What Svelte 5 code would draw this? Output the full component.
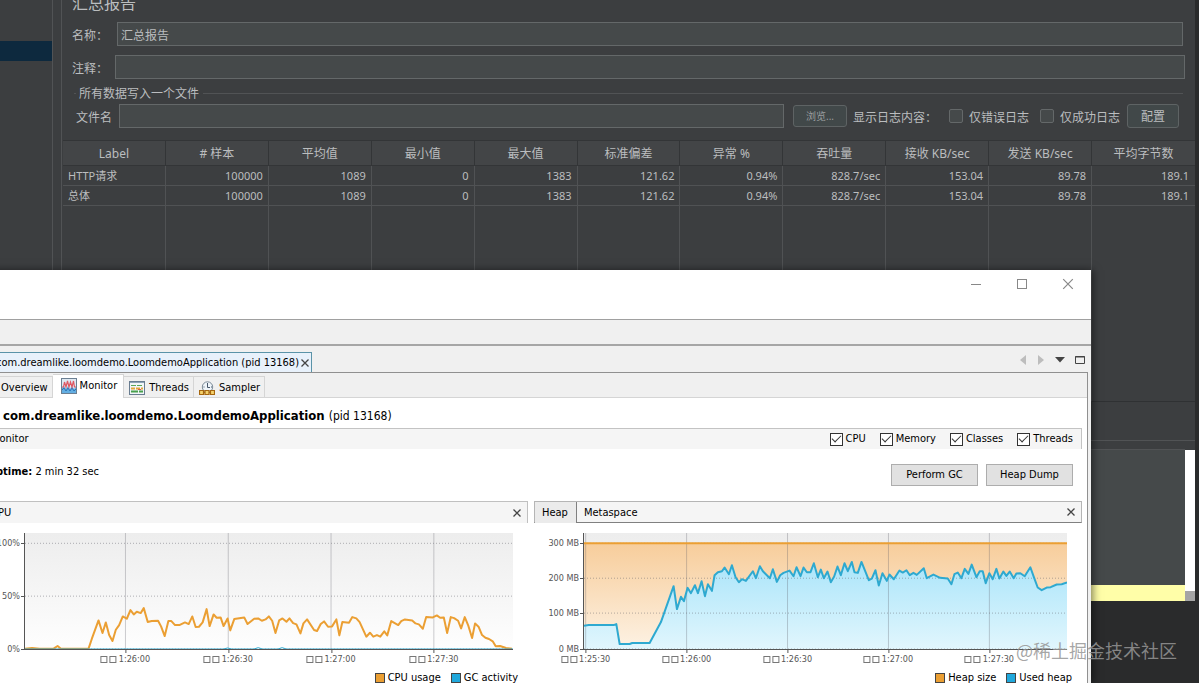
<script>
  const columns = ['Label', '# 样本', '平均值', '最小值', '最大值', '标准偏差', '异常 %', '吞吐量', '接收 KB/sec', '发送 KB/sec', '平均字节数'];
  const samples = [
    ['HTTP请求', '100000', '1089', '0', '1383', '121.62', '0.94%', '828.7/sec', '153.04', '89.78', '189.1'],
    ['总体', '100000', '1089', '0', '1383', '121.62', '0.94%', '828.7/sec', '153.04', '89.78', '189.1']
  ];
  const toggles = ['CPU', 'Memory', 'Classes', 'Threads'];

  const top = 129;
  const height = 349;

  const cpuLine =
    '74,477 95,475 118,477 160,477 172,469 182,477 265,477 275,447 295,392 307,430 317,398 327,436 337,454 347,420 357,406 368,380 380,387 391,361 401,374 410,366 422,370 431,355 443,397 455,394 474,393 483,410 494,439 505,394 514,394 525,406 538,406 555,398 566,403 577,380 587,412 597,411 608,398 620,358 629,409 641,374 650,384 662,383 671,409 683,386 691,422 703,388 733,383 743,403 763,387 775,386 786,393 797,389 807,380 817,393 827,430 838,392 848,386 860,396 869,386 880,400 890,404 902,431 911,401 922,389 943,421 952,424 963,403 973,395 985,411 997,410 1010,389 1019,437 1028,397 1048,399 1058,382 1070,386 1080,397 1100,441 1111,429 1121,441 1132,436 1142,441 1154,425 1163,437 1175,394 1196,406 1205,394 1216,389 1238,392 1248,401 1258,404 1270,417 1280,382 1300,383 1312,377 1322,384 1333,383 1343,430 1354,382 1364,385 1376,393 1385,416 1396,382 1406,406 1418,445 1427,401 1438,412 1448,436 1458,444 1469,448 1480,455 1489,470 1502,469 1520,475 1538,477';
  const gcLine = '74,478 670,478 683,475 696,478 762,478 775,474 788,478 834,478 847,474 860,478 1541,478';
  const heapLine =
    '161,408 175,406 250,406 258,403 268,463 298,463 306,460 358,460 392,397 430,289 440,358 452,321 461,334 472,294 482,310 494,286 503,310 514,274 524,319 533,283 545,303 553,256 563,247 575,244 583,233 596,253 605,226 616,262 626,277 635,268 647,273 668,244 677,265 689,229 698,244 719,265 728,238 740,276 750,256 760,249 778,242 790,259 799,232 811,259 820,233 830,247 841,247 851,220 863,262 872,239 881,265 892,245 902,277 912,260 922,230 932,256 943,220 953,244 965,216 973,247 983,249 994,216 1016,271 1025,266 1036,241 1046,287 1057,250 1070,273 1078,254 1091,268 1108,242 1118,248 1129,241 1139,256 1150,249 1160,255 1181,235 1190,265 1210,254 1230,264 1253,266 1264,283 1273,253 1283,248 1294,265 1304,237 1315,252 1325,224 1339,262 1349,244 1358,244 1367,280 1378,250 1388,268 1399,237 1408,266 1420,245 1429,258 1439,245 1451,265 1459,251 1471,250 1484,259 1501,232 1511,260 1523,293 1535,301 1550,293 1562,292 1580,284 1595,283 1611,278';

  const charts = [
    {
      kind: 'cpu',
      left: 74,
      width: 1467,
      y: [['100%', 160], ['50%', 319], ['0%', 478]],
      x: [['1:26:00', 376], ['1:26:30', 685], ['1:27:00', 994], ['1:27:30', 1303]],
      legend: [['CPU usage', 'orange'], ['GC activity', 'blue']]
    },
    {
      kind: 'heap',
      left: 161,
      width: 1450,
      y: [['300 MB', 160], ['200 MB', 265], ['100 MB', 370], ['0 MB', 478]],
      x: [['1:25:30', 166], ['1:26:00', 469], ['1:26:30', 772], ['1:27:00', 1075], ['1:27:30', 1378]],
      legend: [['Heap size', 'orange'], ['Used heap', 'blue']]
    }
  ];
</script>

{#snippet cross(size)}
  <svg width={size} height={size} viewBox="0 0 10 10" aria-hidden="true"><path d="M1 1L9 9M9 1L1 9" fill="none" stroke="currentColor" /></svg>
{/snippet}

{#snippet smallCross()}
  <svg width="8" height="8" viewBox="0 0 8 8" aria-hidden="true"><path d="M.5 .5L7.500 7.500M7.500 .5L.5 7.500" fill="none" stroke="currentColor" stroke-width="1.300" /></svg>
{/snippet}

<div class="desktop">
  <aside class="tree"><div class="selected"></div></aside>
  <main class="report">
    <div class="form">
      <h1>汇总报告</h1>
      <div class="field"><label for="name">名称：</label><input id="name" value="汇总报告" /></div>
      <div class="field comment"><label for="comment">注释：</label><input id="comment" /></div>
      <fieldset>
        <legend>所有数据写入一个文件</legend>
        <div class="file-row">
          <label for="file">文件名</label>
          <input id="file" class="file" />
          <button class="browse">浏览...</button>
          <span class="log-label">显示日志内容：</span>
          <label class="check"><input type="checkbox" /><span>仅错误日志</span></label>
          <label class="check"><input type="checkbox" /><span>仅成功日志</span></label>
          <button class="config">配置</button>
        </div>
      </fieldset>
    </div>
    <div class="results">
      <table>
        <thead><tr>{#each columns as c}<th>{c}</th>{/each}</tr></thead>
        <tbody>
          {#each samples as row}
            <tr>{#each row as cell}<td>{cell}</td>{/each}</tr>
          {/each}
          <tr class="rest">{#each columns as c}<td></td>{/each}</tr>
        </tbody>
      </table>
    </div>
    <div class="splitter"></div>
    <div class="editor">
      <div class="code"></div>
      <div class="scroll"></div>
    </div>
  </main>

  <section class="window">
    <header class="titlebar">
      <button aria-label="Minimize"><svg width="10" height="10" viewBox="0 0 10 10"><path d="M0 5.500H10" stroke="currentColor" /></svg></button>
      <button aria-label="Maximize"><svg width="10" height="10" viewBox="0 0 10 10"><rect x=".5" y=".5" width="9" height="9" fill="none" stroke="currentColor" /></svg></button>
      <button aria-label="Close">{@render cross(12)}</button>
    </header>
    <div class="toolbar"></div>
    <div class="docs">
      <div class="doc-tab">
        <span>com.dreamlike.loomdemo.LoomdemoApplication (pid 13168)</span>
        <button aria-label="Close tab">{@render smallCross()}</button>
      </div>
      <div class="doc-tools">
        <button aria-label="Previous" class="off"><svg width="6" height="12" viewBox="0 0 6 12"><path d="M6 1V11L0 6Z" fill="currentColor" /></svg></button>
        <button aria-label="Next" class="off"><svg width="6" height="12" viewBox="0 0 6 12"><path d="M0 1V11L6 6Z" fill="currentColor" /></svg></button>
        <button aria-label="List"><svg width="10" height="6" viewBox="0 0 10 6"><path d="M0 0H10L5 5.500Z" fill="currentColor" /></svg></button>
        <button aria-label="Expand"><svg width="10" height="8" viewBox="0 0 10 8"><path d="M.5 .5H9.500V7.500H.5Z M0 1H10" fill="none" stroke="currentColor" /></svg></button>
      </div>
    </div>

    <div class="frame">
      <nav class="views">
        <button>Overview</button>
        <button class="active">
          <svg width="16" height="16" viewBox="0 0 16 16" aria-hidden="true">
            <rect x=".5" y=".5" width="15" height="15" fill="#dfe9f2" stroke="#6b7f92" />
            <path d="M1 10L3 8 5 11 7 8 9 11 11 8 13 11 15 9V15H1Z" fill="#63aee2" />
            <path d="M1 12L3 10 5 13 7 10 9 13 11 10 13 13 15 11" fill="none" stroke="#2c76b8" />
            <path d="M1 9H2.500L3.500 4 5 9 6.500 3 8 9 9.500 4 11 9 12.500 3 13.500 9H15" fill="none" stroke="#df5862" stroke-width="1.200" />
          </svg>Monitor
        </button>
        <button>
          <svg width="16" height="14" viewBox="0 0 16 14" aria-hidden="true">
            <rect x=".5" y=".5" width="15" height="13" fill="#f2f5f8" stroke="#687c90" />
            <path d="M1 1.500H15" stroke="#8da4b8" />
            <path d="M2 4.500H14" stroke="#58a55a" stroke-dasharray="5 1" />
            <path d="M2 7.500H14" stroke="#e2a63a" stroke-width="2" stroke-dasharray="4 1" />
            <path d="M2 10.500H14" stroke="#48a04c" stroke-width="2" stroke-dasharray="7 1" />
            <path d="M9 8.500H12" stroke="#d35a4c" />
          </svg>Threads
        </button>
        <button>
          <svg width="16" height="15" viewBox="0 0 16 15" aria-hidden="true">
            <circle cx="8.500" cy="6" r="5.200" fill="#eef4f9" stroke="#7d8b98" />
            <path d="M8.500 2V6.500H11M4.500 6H5.500M12 6H13" fill="none" stroke="#46576a" />
            <path d="M.5 9.500H4.500V13.500H.5ZM6 9.500H10V13.500H6ZM11.500 9.500H15.500V13.500H11.500ZM4.500 11.500H6M10 11.500H11.500" fill="#f5d26c" stroke="#a6670f" stroke-width="1.200" />
          </svg>Sampler
        </button>
      </nav>
      <h2>com.dreamlike.loomdemo.LoomdemoApplication <span>(pid 13168)</span></h2>
      <div class="section-head">
        <span>Monitor</span>
        <div class="toggles">
          {#each toggles as t}
            <label><input type="checkbox" checked />{t}</label>
          {/each}
        </div>
      </div>
      <div class="summary">
        <p><b>Uptime:</b> 2 min 32 sec</p>
        <div class="actions"><button>Perform GC</button><button>Heap Dump</button></div>
      </div>
      <div class="panels">
        {#each charts as chart}
          <article class={chart.kind}>
            <header>
              {#if chart.kind === 'cpu'}
                <span>CPU</span>
              {:else}
                <button class="chip on">Heap</button><button class="chip">Metaspace</button>
              {/if}
              <button class="close" aria-label="Close panel">{@render smallCross()}</button>
            </header>
            <div class="plot">
              <svg class="canvas" viewBox="{chart.left} {top} {chart.width} {height}" preserveAspectRatio="none" aria-hidden="true">
                <defs>
                  <linearGradient id="back-{chart.kind}" x2="0" y2="1"><stop stop-color="#ededed" /><stop offset="1" stop-color="#fefefe" /></linearGradient>
                  <linearGradient id="size-{chart.kind}" x2="0" y2="1"><stop stop-color="#f7cd9b" /><stop offset="1" stop-color="#fdf2e4" /></linearGradient>
                  <linearGradient id="used-{chart.kind}" x2="0" y2="1"><stop stop-color="#abe5fa" /><stop offset="1" stop-color="#e1f6fd" /></linearGradient>
                </defs>
                <rect x={chart.left} y={top} width={chart.width} {height} fill="url(#back-{chart.kind})" />
                {#if chart.kind === 'heap'}
                  <rect x={chart.left} y="160" width={chart.width} height="318" fill="url(#size-heap)" />
                  <polygon points="161,478 {heapLine} 1611,478" fill="url(#used-heap)" />
                {/if}
                {#each chart.y as [, y]}
                  <path class="grid dotted" d="M{chart.left} {y}h{chart.width}" />
                {/each}
                {#each chart.x as [, x]}
                  <path class="grid" d="M{x} {top}v{height}" />
                {/each}
                {#if chart.kind === 'cpu'}
                  <polyline class="orange" points={cpuLine} />
                  <polyline class="blue thin" points={gcLine} />
                {:else}
                  <path class="orange" d="M161 160H1611" />
                  <polyline class="blue" points={heapLine} />
                {/if}
              </svg>
              {#each chart.y as [text, y]}
                <span class="ylabel" style="top: {((y - top) / height) * 100}%">{text}</span>
              {/each}
              {#each chart.x as [text, x]}
                <span class="xlabel" style="left: {((x - chart.left) / chart.width) * 100}%"><i></i><i></i>{text}</span>
              {/each}
            </div>
            <ul>
              {#each chart.legend as [text, tone]}<li><i class={tone}></i>{text}</li>{/each}
            </ul>
          </article>
        {/each}
      </div>
    </div>
  </section>

  <div class="watermark">@稀土掘金技术社区</div>
</div>

<style>
  :global(body) { margin: 0; background: #2b2b2b; }
  .desktop {
    position: relative;
    display: flex;
    height: 100vh;
    overflow: hidden;
    padding-right: 4px;
    box-sizing: border-box;
    background: #2a2b2c;
    color: #bbbdbf;
    font: 12px/16px "Noto Sans", "Noto Sans CJK SC", sans-serif;
  }
  button, input { font: inherit; color: inherit; box-sizing: border-box; }
  button { margin: 0; padding: 0; border: 0; background: none; }
  input { margin: 0; }
  h1, h2, p, ul { margin: 0; padding: 0; }

  .tree { width: 52px; padding-top: 41px; background: #3c3e40; border-right: 1px solid #515355; margin-bottom: 82px; }
  .selected { height: 20px; background: #0d293e; }
  .report {
    flex: 1;
    display: flex;
    flex-direction: column;
    min-width: 0;
    margin-bottom: 82px;
    background: #3c3e40;
    border-left: 1px solid #515355;
    box-shadow: -8px 0 #3c3e40;
    margin-left: 8px;
  }
  .form { height: 140px; padding: 0 10px; box-sizing: border-box; }
  h1 { margin-top: -9px; height: 31px; font-size: 16px; line-height: 24px; font-weight: 400; }
  .field { display: flex; align-items: center; height: 24px; margin: 0 2px 9px 0; }
  .field label { width: 45px; padding-top: 3px; }
  .field.comment { margin-right: 0; }
  .field.comment label { width: 43px; }
  .field input, .file {
    flex: 1;
    min-width: 0;
    height: 24px;
    padding: 2px 3px 0;
    border: 1px solid #646869;
    background: #45494a;
  }
  fieldset { margin: -3px 2px 0; padding: 0; border: 0; border-top: 1px solid #515355; min-width: 0; }
  legend { margin-left: 2px; padding: 1px 4px 0 3px; height: 16px; }
  .file-row { display: flex; align-items: center; margin: 2px 4px 0 2px; height: 24px; }
  .file-row > label:first-child { width: 43px; padding-top: 3px; white-space: nowrap; }
  .browse, .config {
    height: 24px;
    border: 1px solid #5e6364;
    border-radius: 3px;
    background: #414849;
  }
  .browse { width: 54px; height: 22px; margin: 0 6px 0 9px; font-size: 10px; color: #9a9d9f; }
  .config { width: 52px; padding-top: 2px; }
  .log-label { width: 96px; padding-top: 3px; white-space: nowrap; }
  .check { display: flex; align-items: center; gap: 6px; width: 91px; white-space: nowrap; }
  .check span { padding-top: 3px; }
  .check + .check { width: 87px; }
  .check input { appearance: none; width: 14px; height: 14px; border: 1px solid #646869; border-radius: 2px; background: #45494a; }

  .results { padding-left: 1px; }
  table { width: 100%; table-layout: fixed; border-collapse: separate; border-spacing: 0; font-size: 11px; line-height: 16px; border-top: 1px solid #333537; }
  th, td { box-sizing: border-box; border-right: 1px solid #505254; border-bottom: 1px solid #505254; white-space: nowrap; font-weight: 400; }
  th { height: 25px; padding: 2px 0 0; background: #434547; border-color: #333537; font-size: 12px; }
  td { height: 20px; padding: 0 5px; text-align: right; }
  td:first-child { text-align: left; }
  th:last-child, td:last-child { border-right: 0; padding-right: 6px; }
  th:last-child { padding-right: 0; }
  .rest td { height: 196px; border-bottom-color: #2f3133; }
  .splitter { height: 38px; margin-bottom: 8px; border-bottom: 1px solid #515355; }
  .editor { flex: 1; display: flex; }
  .code { flex: 1; background: #45494a; border-bottom: 16px solid #fffea8; border-top: 1px solid #515355; }
  .scroll { width: 10px; margin-top: 1px; background: #fff; border-bottom: 10px solid #a5a5a5; }

  .window {
    position: absolute;
    top: 270px;
    left: -20px;
    right: 108px;
    bottom: 0;
    background: #f0f0f0;
    color: #000;
    font: 11px/16px "DejaVu Sans Condensed", "DejaVu Sans", sans-serif;
    box-shadow: 2px 0 8px rgba(0, 0, 0, 0.5);
  }
  .titlebar { display: flex; justify-content: flex-end; gap: 34px; height: 49px; padding-right: 17px; background: #fff; color: #888; border-bottom: 1px solid #a0a0a0; }
  .titlebar button { display: grid; place-items: center; height: 28px; min-width: 12px; }
  .toolbar { height: 24px; border-bottom: 2px solid #a6a6a6; }
  .docs { display: flex; justify-content: space-between; align-items: flex-end; height: 26px; }
  .doc-tab {
    display: flex;
    align-items: center;
    gap: 2px;
    height: 20px;
    box-sizing: border-box;
    padding: 1px 2px 0 16px;
    border: solid #5a93a8;
    border-width: 1px 1px 0 0;
    background: #e8f1fb;
    white-space: nowrap;
  }
  .doc-tab button, .doc-tools button, .close { display: grid; place-items: center; color: #444; }
  .doc-tools { display: flex; align-items: center; gap: 10px; height: 24px; padding-right: 6px; }
  .doc-tools .off { color: #bdbdbd; min-width: 8px; }
  .frame { margin-right: 3px; border: solid #909090; border-width: 1px 1px 0 0; background: #fff; padding-right: 5px; }
  .views { display: flex; align-items: flex-end; height: 24px; margin-right: -5px; padding-left: 15px; background: #f0f0f0; border-bottom: 1px solid #d5d5d5; }
  .views button { display: flex; align-items: center; gap: 4px; height: 21px; padding: 2px 4px 0 5px; border: solid #d5d5d5; border-width: 1px 1px 0 0; white-space: nowrap; }
  .views button:first-child { padding: 2px 4px 0 6px; }
  .views .active { height: 24px; margin-bottom: -1px; padding: 0 6px 1px 8px; gap: 3px; box-sizing: border-box; background: #fff; }
  h2 { height: 30px; padding: 3px 0 0 23px; box-sizing: border-box; font-size: 13px; line-height: 30px; }
  h2 span { font-weight: 400; font-size: 12px; }
  .section-head { display: flex; justify-content: space-between; align-items: center; height: 20px; padding: 0 8px 0 11px; border: solid #c3c3c3; border-width: 1px 1px 0 0; background: #f5f5f5; }
  .toggles { display: flex; gap: 14px; }
  .toggles label { display: flex; align-items: center; gap: 3px; }
  .toggles input {
    appearance: none;
    width: 13px;
    height: 13px;
    border: 1px solid #333;
    background: #fff;
    display: grid;
    place-items: center;
  }
  .toggles input::after { content: ""; width: 8px; height: 4px; margin-top: -3px; border: solid #333; border-width: 0 0 1px 1px; transform: rotate(-45deg); }
  .summary { display: flex; justify-content: space-between; height: 52px; padding: 15px 9px 0 8px; box-sizing: border-box; }
  .actions { display: flex; gap: 8px; }
  .actions button { width: 87px; height: 22px; border: 1px solid #adadad; background: #e1e1e1; }
  .panels { display: grid; grid-template-columns: 1fr 1fr; gap: 6px; }
  article header { display: flex; align-items: center; height: 22px; box-sizing: border-box; border: solid #c0c0c0; border-width: 1px 1px 0; background: #f5f5f5; }
  .cpu header { padding-left: 10px; }
  .heap header { border-color: #b5b5b5; border-bottom: 1px solid #808080; }
  .chip { height: 21px; padding: 1px 7px 0; }
  .chip.on { padding: 1px 8px 0 7px; background: #ebebeb; border: solid #808080; border-width: 0 1px 0 0; }
  .close { margin: 0 6px 0 auto; }
  .plot { position: relative; height: 116px; margin: 10px 15px 0 44px; border: solid #555; border-width: 0 0 1px 1px; color: #555; font-size: 9px; line-height: 12px; }
  .heap .plot { margin-left: 49px; }
  .canvas { display: block; width: 100%; height: 100%; }
  .canvas path, .canvas polyline { fill: none; vector-effect: non-scaling-stroke; stroke-width: 2px; stroke-linejoin: round; }
  .canvas .grid { stroke: rgba(90, 90, 100, 0.3); stroke-width: 1px; }
  .canvas .dotted { stroke-dasharray: 1 2; stroke: rgba(90, 90, 100, 0.45); }
  .canvas .orange { stroke: #eb9f33; }
  .canvas .blue { stroke: #2ea9d0; }
  .canvas .thin { stroke-width: 1px; }
  .ylabel { position: absolute; right: 100%; transform: translateY(-50%); padding-right: 5px; white-space: nowrap; }
  .ylabel::after { content: ""; position: absolute; right: 0; top: 6px; width: 4px; height: 1px; background: #555; }
  .xlabel { position: absolute; top: 100%; display: flex; align-items: center; gap: 2px; transform: translateX(-50%); padding-top: 4px; white-space: nowrap; }
  .xlabel::before { content: ""; position: absolute; top: 0; left: 50%; width: 1px; height: 4px; background: #555; }
  .xlabel i { width: 5px; height: 5px; border: 1px solid #777; }
  ul { display: flex; justify-content: flex-end; gap: 10px; margin-top: 20px; padding-right: 10px; list-style: none; }
  li { display: flex; align-items: center; gap: 3px; }
  li i { width: 8px; height: 8px; border: 1px solid #444; }
  li .orange { background: #eb9f33; }
  li .blue { background: #20a8dc; }

  .watermark { position: absolute; right: 22px; bottom: 20px; color: rgba(150, 150, 150, 0.85); font: 18px/26px "Noto Sans CJK SC", sans-serif; }
</style>
